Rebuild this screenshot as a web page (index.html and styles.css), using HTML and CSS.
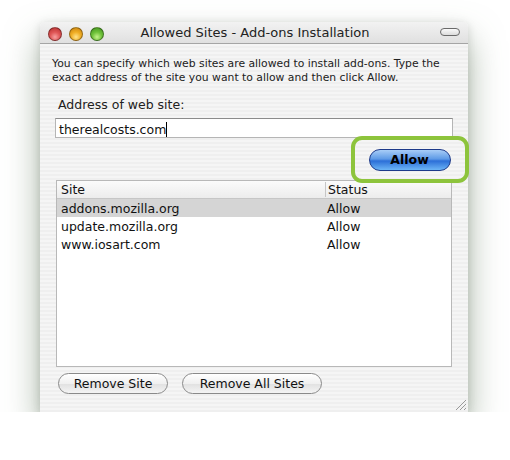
FILE: index.html
```html
<!DOCTYPE html>
<html lang="en">
<head>
  <meta charset="UTF-8" />
  <title>Allowed Sites - Add-ons Installation</title>
  <link rel="stylesheet" href="styles.css">
</head>
<body>
  <div class="window">
    <div class="titlebar">
      <div class="lights">
        <span class="light red"></span>
        <span class="light yellow"></span>
        <span class="light green"></span>
      </div>
      <div class="title">Allowed Sites - Add-ons Installation</div>
      <span class="pill"></span>
    </div>

    <div class="content">
      <p class="intro">You can specify which web sites are allowed to install add-ons. Type the exact address of the site you want to allow and then click Allow.</p>

      <label class="addr-label" for="site">Address of web site:</label>
      <div class="addr-box"><span id="site">therealcosts.com</span><span class="caret"></span></div>

      <div class="allow-row">
        <div class="highlight">
          <button class="aqua">Allow</button>
        </div>
      </div>

      <div class="sites">
        <div class="row head">
          <div class="col-site">Site</div>
          <div class="col-status">Status</div>
        </div>
        <div class="row selected">
          <div class="col-site">addons.mozilla.org</div>
          <div class="col-status">Allow</div>
        </div>
        <div class="row">
          <div class="col-site">update.mozilla.org</div>
          <div class="col-status">Allow</div>
        </div>
        <div class="row">
          <div class="col-site">www.iosart.com</div>
          <div class="col-status">Allow</div>
        </div>
      </div>

      <div class="actions">
        <button class="plain">Remove Site</button>
        <button class="plain">Remove All Sites</button>
      </div>
    </div>

    <!-- resize grip -->
    <svg class="grip" width="14" height="14" viewBox="0 0 14 14">
      <line x1="13" y1="3" x2="3" y2="13" stroke="#999" stroke-width="1"/>
      <line x1="13" y1="7" x2="7" y2="13" stroke="#999" stroke-width="1"/>
      <line x1="13" y1="11" x2="11" y2="13" stroke="#999" stroke-width="1"/>
    </svg>
  </div>
</body>
</html>
```

FILE: styles.css
```css
body {
  margin: 0;
  background: #fff;
  font-family: "DejaVu Sans", "Liberation Sans", sans-serif;
  color: #111;
}

.window {
  position: relative;
  width: 428px;
  height: 390px;
  margin: 22px 0 0 40px;
  background: repeating-linear-gradient(to bottom, #efefef 0, #efefef 2px, #f5f5f5 2px, #f5f5f5 4px);
  border-radius: 5px 5px 0 0;
  box-shadow: 0 18px 34px rgba(95, 120, 90, 0.55), 0 2px 10px rgba(0, 0, 0, 0.15);
}

.titlebar {
  position: relative;
  height: 21px;
  display: flex;
  align-items: center;
  justify-content: center;
  border-bottom: 1px solid #a5a5a5;
  border-radius: 5px 5px 0 0;
  background: linear-gradient(to bottom, #f2f2f2, #e0e0e0);
}

.lights {
  position: absolute;
  left: 8px;
  top: 5px;
  display: flex;
  gap: 7px;
}

.light {
  width: 14px;
  height: 14px;
  border-radius: 50%;
  box-sizing: border-box;
  border: 1px solid rgba(0, 0, 0, 0.35);
}

.red { background: radial-gradient(circle at 50% 75%, #f7a0a0 0, #e05656 45%, #b32d2d 100%); }
.yellow { background: radial-gradient(circle at 50% 75%, #ffe38a 0, #f0ae25 45%, #c67f0c 100%); }
.green { background: radial-gradient(circle at 50% 75%, #c5f28a 0, #6fc23a 45%, #3f8e1c 100%); }

.title {
  font-size: 13px;
  color: #222;
  margin-left: 2px;
}

.pill {
  position: absolute;
  right: 8px;
  top: 6px;
  width: 20px;
  height: 8px;
  box-sizing: border-box;
  border: 1.5px solid #6a6a6a;
  border-radius: 5px;
  background: linear-gradient(#fafafa, #dcdcdc);
}

.content {
  padding: 13px 15px 0 12px;
}

.intro {
  margin: 0;
  width: 396px;
  font-size: 10.8px;
  line-height: 14px;
  color: #222;
}

.addr-label {
  display: block;
  margin: 12px 0 0 6px;
  font-size: 12.5px;
  color: #222;
}

.addr-box {
  margin: 6px 0 0 3px;
  height: 20px;
  box-sizing: border-box;
  width: 398px;
  background: #fff;
  border: 1px solid #b5b5b5;
  border-top-color: #8c8c8c;
  font-size: 12.5px;
  padding: 2px 0 0 3px;
  display: flex;
  align-items: center;
}

.caret {
  width: 1px;
  height: 15px;
  background: #000;
}

.allow-row {
  display: flex;
  justify-content: flex-end;
  margin-top: -2px;
  margin-right: -16px;
}

.highlight {
  width: 118px;
  height: 47px;
  box-sizing: border-box;
  border: 4px solid #8dc43c;
  border-radius: 11px;
  display: flex;
  align-items: center;
  justify-content: center;
}

.aqua {
  width: 82px;
  height: 22px;
  margin-right: 1px;
  border-radius: 11px;
  border: 1px solid #1d3a8a;
  background: linear-gradient(to bottom, #a8cdf7 0, #5d9ae6 45%, #2c6fd8 55%, #6cb5f6 100%);
  font-family: "DejaVu Sans", sans-serif;
  font-weight: bold;
  font-size: 12.5px;
  color: #000;
  padding: 0;
}

.sites {
  margin: -3px 0 0 4px;
  width: 396px;
  height: 187px;
  box-sizing: border-box;
  background: #fff;
  border: 1px solid #b8b8b8;
  font-size: 12.5px;
}

.row {
  display: flex;
  height: 18px;
  align-items: center;
}

.row.head {
  height: 17px;
  background: linear-gradient(#fbfbfb, #ececec);
  border-bottom: 1px solid #c6c6c6;
}

.row.selected {
  background: #d5d5d5;
}

.col-site {
  width: 264px;
  padding-left: 4px;
}

.head .col-site {
  border-right: 1px solid #c6c6c6;
}

.col-status {
  padding-left: 2px;
}

.actions {
  display: flex;
  gap: 14px;
  margin: 6px 0 0 6px;
}

.plain {
  height: 21px;
  padding: 0;
  white-space: nowrap;
  border-radius: 11px;
  border: 1px solid #8a8a8a;
  background: linear-gradient(to bottom, #ffffff 0, #f0f0f0 50%, #e2e2e2 55%, #f4f4f4 100%);
  font-family: "DejaVu Sans", sans-serif;
  font-size: 12.5px;
  color: #111;
}

.plain:first-child {
  width: 110px;
}

.plain:last-child {
  width: 140px;
}

.grip {
  position: absolute;
  right: 1px;
  bottom: 1px;
}
```
